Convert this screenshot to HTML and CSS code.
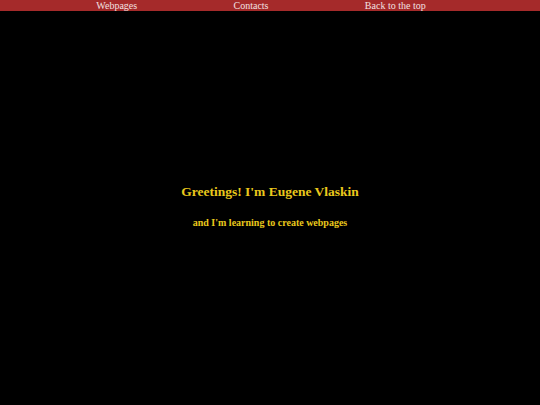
FILE: index.html
```html
<!DOCTYPE html>
<html>
<head>
<meta charset="utf-8">
<link rel="stylesheet" href="styles.css">
</head>
<body>
<nav class="nav">
  <a class="nav-link" href="#">Webpages</a>
  <a class="nav-link" href="#">Contacts</a>
  <a class="nav-link" href="#">Back to the top</a>
</nav>
<main class="hero">
  <h1 class="title">Greetings! I'm Eugene Vlaskin</h1>
  <h2 class="subtitle">and I'm learning to create webpages</h2>
</main>
</body>
</html>
```
FILE: styles.css
```css
html, body {
  margin: 0;
  padding: 0;
  background: #000;
  height: 100%;
}
body {
  font-family: "Liberation Serif", "Times New Roman", serif;
}
.nav {
  display: flex;
  justify-content: space-evenly;
  padding-right: 18px;
  height: 11px;
  background: #a52a2a;
  font-size: 10px;
  line-height: 11px;
}
.nav-link {
  color: #f2e0e0;
  text-decoration: none;
}
.hero {
  display: flex;
  flex-direction: column;
  align-items: center;
  padding-top: 162px;
}
.title {
  margin: 0;
  font-size: 13.5px;
  line-height: 38px;
  color: #eac81c;
}
.subtitle {
  margin: 0;
  font-size: 10px;
  line-height: 24px;
  color: #eac81c;
}
```
